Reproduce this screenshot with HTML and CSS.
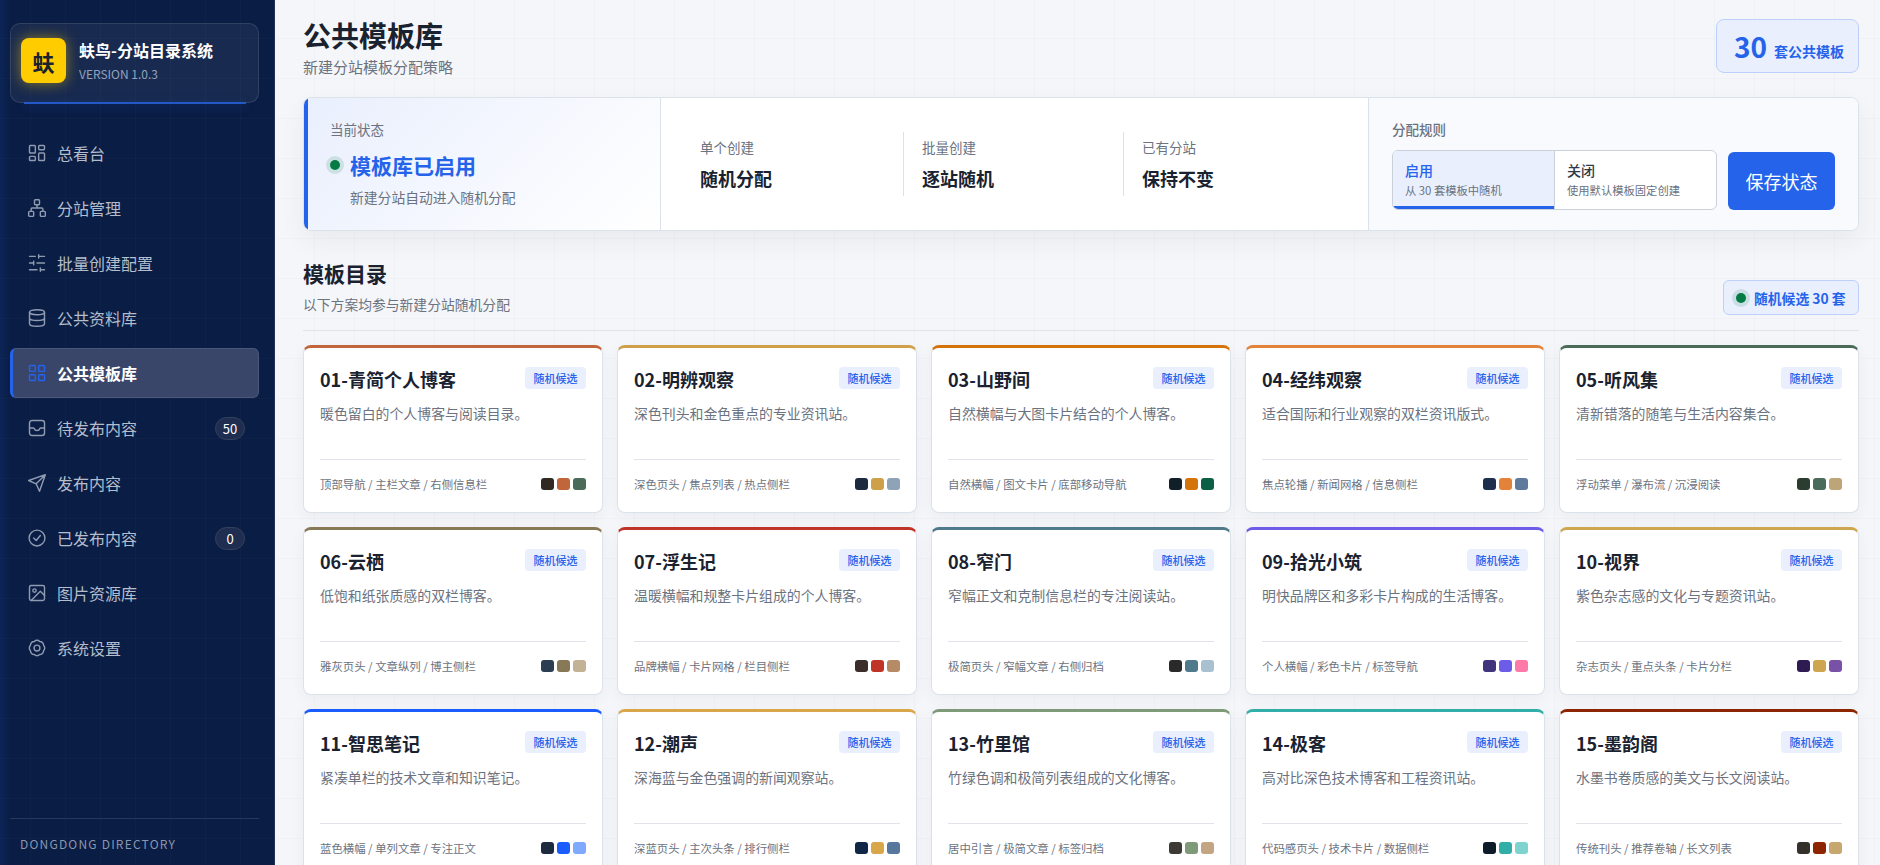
FILE: index.html
```html
<!DOCTYPE html>
<html lang="zh-CN">
<head>
    <meta charset="UTF-8">
    <title>公共模板库</title>
    <link rel="stylesheet" href="styles.css">
</head>
<body>
<div class="app">
    <aside class="sidebar">
        <div class="brand">
            <div class="brand-logo">蚨</div>
            <div>
                <div class="brand-name">蚨鸟-分站目录系统</div>
                <div class="brand-version">VERSION 1.0.3</div>
            </div>
        </div>

        <nav class="nav">
            <a class="nav-item">
                <svg class="nav-icon" viewBox="0 0 24 24"><rect x="3" y="3" width="7" height="9" rx="1"/><rect x="14" y="3" width="7" height="5" rx="1"/><rect x="14" y="12" width="7" height="9" rx="1"/><rect x="3" y="16" width="7" height="5" rx="1"/></svg>
                <span>总看台</span>
            </a>
            <a class="nav-item">
                <svg class="nav-icon" viewBox="0 0 24 24"><rect x="9" y="2" width="6" height="6" rx="1"/><rect x="2" y="16" width="6" height="6" rx="1"/><rect x="16" y="16" width="6" height="6" rx="1"/><path d="M5 16v-3a1 1 0 0 1 1-1h12a1 1 0 0 1 1 1v3M12 12V8"/></svg>
                <span>分站管理</span>
            </a>
            <a class="nav-item">
                <svg class="nav-icon" viewBox="0 0 24 24"><path d="M21 4h-7M10 4H3M21 12h-9M8 12H3M21 20h-5M12 20H3M14 2v4M8 10v4M16 18v4"/></svg>
                <span>批量创建配置</span>
            </a>
            <a class="nav-item">
                <svg class="nav-icon" viewBox="0 0 24 24"><ellipse cx="12" cy="5" rx="9" ry="3"/><path d="M3 5v14a9 3 0 0 0 18 0V5M3 12a9 3 0 0 0 18 0"/></svg>
                <span>公共资料库</span>
            </a>
            <a class="nav-item active">
                <svg class="nav-icon" viewBox="0 0 24 24"><rect x="3" y="3" width="7" height="7" rx="1"/><rect x="14" y="3" width="7" height="7" rx="1"/><rect x="14" y="14" width="7" height="7" rx="1"/><rect x="3" y="14" width="7" height="7" rx="1"/></svg>
                <span>公共模板库</span>
            </a>
            <a class="nav-item">
                <svg class="nav-icon" viewBox="0 0 24 24"><rect x="3" y="3" width="18" height="18" rx="3"/><path d="M3 12h4.5c.6 0 1 .4 1.2.9.4 1.3 1.7 2.1 3.3 2.1s2.9-.8 3.3-2.1c.2-.5.6-.9 1.2-.9H21"/></svg>
                <span>待发布内容</span>
                <em class="nav-count">50</em>
            </a>
            <a class="nav-item">
                <svg class="nav-icon" viewBox="0 0 24 24"><path d="M22 2 11 13M22 2l-7 20-4-9-9-4z"/></svg>
                <span>发布内容</span>
            </a>
            <a class="nav-item">
                <svg class="nav-icon" viewBox="0 0 24 24"><circle cx="12" cy="12" r="9.5"/><path d="m8 12 3 3 5-6"/></svg>
                <span>已发布内容</span>
                <em class="nav-count">0</em>
            </a>
            <a class="nav-item">
                <svg class="nav-icon" viewBox="0 0 24 24"><rect x="3" y="3" width="18" height="18" rx="2"/><circle cx="9" cy="9" r="2"/><path d="m21 15-5-5L5 21"/></svg>
                <span>图片资源库</span>
            </a>
            <a class="nav-item">
                <svg class="nav-icon" viewBox="0 0 24 24"><circle cx="12" cy="12" r="3.5"/><path d="M8.75 4.15A4.5 4.5 0 0 1 15.25 4.15A4.5 4.5 0 0 1 19.85 8.75A4.5 4.5 0 0 1 19.85 15.25A4.5 4.5 0 0 1 15.25 19.85A4.5 4.5 0 0 1 8.75 19.85A4.5 4.5 0 0 1 4.15 15.25A4.5 4.5 0 0 1 4.15 8.75A4.5 4.5 0 0 1 8.75 4.15z"/></svg>
                <span>系统设置</span>
            </a>
        </nav>

        <div class="sidebar-foot">DONGDONG DIRECTORY</div>
    </aside>

    <main class="main">
        <header class="page-head">
            <div>
                <h1>公共模板库</h1>
                <p>新建分站模板分配策略</p>
            </div>
            <div class="total-box"><strong>30</strong><span>套公共模板</span></div>
        </header>

        <section class="status-panel">
            <div class="status-now">
                <div class="status-label">当前状态</div>
                <div class="status-title"><i class="dot"></i>模板库已启用</div>
                <div class="status-note">新建分站自动进入随机分配</div>
            </div>
            <div class="status-modes">
                <div class="mode">
                    <div class="mode-label">单个创建</div>
                    <div class="mode-value">随机分配</div>
                </div>
                <div class="mode">
                    <div class="mode-label">批量创建</div>
                    <div class="mode-value">逐站随机</div>
                </div>
                <div class="mode">
                    <div class="mode-label">已有分站</div>
                    <div class="mode-value">保持不变</div>
                </div>
            </div>
            <div class="status-rule">
                <div class="rule-label">分配规则</div>
                <div class="rule-row">
                    <div class="segment">
                        <div class="segment-item on">
                            <b>启用</b>
                            <small>从 30 套模板中随机</small>
                        </div>
                        <div class="segment-item">
                            <b>关闭</b>
                            <small>使用默认模板固定创建</small>
                        </div>
                    </div>
                    <button class="save-btn">保存状态</button>
                </div>
            </div>
        </section>

        <div class="section-head">
            <div>
                <h2>模板目录</h2>
                <p>以下方案均参与新建分站随机分配</p>
            </div>
            <div class="candidate-pill"><i class="dot"></i>随机候选 30 套</div>
        </div>

        <div class="template-grid">
            <article class="card" style="--accent:#c0663a">
                <div class="card-top"><h3>01-青简个人博客</h3><span class="tag">随机候选</span></div>
                <p class="card-desc">暖色留白的个人博客与阅读目录。</p>
                <div class="card-foot"><span>顶部导航 / 主栏文章 / 右侧信息栏</span><div class="swatches"><i style="background:#2f2823"></i><i style="background:#c0663a"></i><i style="background:#4a6b5a"></i></div></div>
            </article>
            <article class="card" style="--accent:#cfa04a">
                <div class="card-top"><h3>02-明辨观察</h3><span class="tag">随机候选</span></div>
                <p class="card-desc">深色刊头和金色重点的专业资讯站。</p>
                <div class="card-foot"><span>深色页头 / 焦点列表 / 热点侧栏</span><div class="swatches"><i style="background:#1b2a3f"></i><i style="background:#cfa04a"></i><i style="background:#8fa3b8"></i></div></div>
            </article>
            <article class="card" style="--accent:#d4730a">
                <div class="card-top"><h3>03-山野间</h3><span class="tag">随机候选</span></div>
                <p class="card-desc">自然横幅与大图卡片结合的个人博客。</p>
                <div class="card-foot"><span>自然横幅 / 图文卡片 / 底部移动导航</span><div class="swatches"><i style="background:#101f28"></i><i style="background:#d4730a"></i><i style="background:#0a5f45"></i></div></div>
            </article>
            <article class="card" style="--accent:#e5823a">
                <div class="card-top"><h3>04-经纬观察</h3><span class="tag">随机候选</span></div>
                <p class="card-desc">适合国际和行业观察的双栏资讯版式。</p>
                <div class="card-foot"><span>焦点轮播 / 新闻网格 / 信息侧栏</span><div class="swatches"><i style="background:#1e2f4d"></i><i style="background:#e5823a"></i><i style="background:#5f7a9c"></i></div></div>
            </article>
            <article class="card" style="--accent:#4a6b5a">
                <div class="card-top"><h3>05-听风集</h3><span class="tag">随机候选</span></div>
                <p class="card-desc">清新错落的随笔与生活内容集合。</p>
                <div class="card-foot"><span>浮动菜单 / 瀑布流 / 沉浸阅读</span><div class="swatches"><i style="background:#2b3d30"></i><i style="background:#4a6b5a"></i><i style="background:#bda578"></i></div></div>
            </article>
            <article class="card" style="--accent:#877856">
                <div class="card-top"><h3>06-云栖</h3><span class="tag">随机候选</span></div>
                <p class="card-desc">低饱和纸张质感的双栏博客。</p>
                <div class="card-foot"><span>雅灰页头 / 文章纵列 / 博主侧栏</span><div class="swatches"><i style="background:#2b3d50"></i><i style="background:#877856"></i><i style="background:#c3b295"></i></div></div>
            </article>
            <article class="card" style="--accent:#c03428">
                <div class="card-top"><h3>07-浮生记</h3><span class="tag">随机候选</span></div>
                <p class="card-desc">温暖横幅和规整卡片组成的个人博客。</p>
                <div class="card-foot"><span>品牌横幅 / 卡片网格 / 栏目侧栏</span><div class="swatches"><i style="background:#3a2d2a"></i><i style="background:#c03428"></i><i style="background:#b78a66"></i></div></div>
            </article>
            <article class="card" style="--accent:#4f7a8c">
                <div class="card-top"><h3>08-窄门</h3><span class="tag">随机候选</span></div>
                <p class="card-desc">窄幅正文和克制信息栏的专注阅读站。</p>
                <div class="card-foot"><span>极简页头 / 窄幅文章 / 右侧归档</span><div class="swatches"><i style="background:#2a2a2a"></i><i style="background:#4f7a8c"></i><i style="background:#a8c0cf"></i></div></div>
            </article>
            <article class="card" style="--accent:#6c5ce7">
                <div class="card-top"><h3>09-拾光小筑</h3><span class="tag">随机候选</span></div>
                <p class="card-desc">明快品牌区和多彩卡片构成的生活博客。</p>
                <div class="card-foot"><span>个人横幅 / 彩色卡片 / 标签导航</span><div class="swatches"><i style="background:#40347c"></i><i style="background:#6c5ce7"></i><i style="background:#fd79a8"></i></div></div>
            </article>
            <article class="card" style="--accent:#cfa650">
                <div class="card-top"><h3>10-视界</h3><span class="tag">随机候选</span></div>
                <p class="card-desc">紫色杂志感的文化与专题资讯站。</p>
                <div class="card-foot"><span>杂志页头 / 重点头条 / 卡片分栏</span><div class="swatches"><i style="background:#2d1b52"></i><i style="background:#cfa650"></i><i style="background:#7952a8"></i></div></div>
            </article>
            <article class="card" style="--accent:#1a5cff">
                <div class="card-top"><h3>11-智思笔记</h3><span class="tag">随机候选</span></div>
                <p class="card-desc">紧凑单栏的技术文章和知识笔记。</p>
                <div class="card-foot"><span>蓝色横幅 / 单列文章 / 专注正文</span><div class="swatches"><i style="background:#1b2a3f"></i><i style="background:#1a5cff"></i><i style="background:#7fa8ff"></i></div></div>
            </article>
            <article class="card" style="--accent:#d9a74a">
                <div class="card-top"><h3>12-潮声</h3><span class="tag">随机候选</span></div>
                <p class="card-desc">深海蓝与金色强调的新闻观察站。</p>
                <div class="card-foot"><span>深蓝页头 / 主次头条 / 排行侧栏</span><div class="swatches"><i style="background:#0f2744"></i><i style="background:#d9a74a"></i><i style="background:#56789c"></i></div></div>
            </article>
            <article class="card" style="--accent:#7f9a78">
                <div class="card-top"><h3>13-竹里馆</h3><span class="tag">随机候选</span></div>
                <p class="card-desc">竹绿色调和极简列表组成的文化博客。</p>
                <div class="card-foot"><span>居中引言 / 极简文章 / 标签归档</span><div class="swatches"><i style="background:#3d3a35"></i><i style="background:#7f9a78"></i><i style="background:#c2a582"></i></div></div>
            </article>
            <article class="card" style="--accent:#32aea8">
                <div class="card-top"><h3>14-极客</h3><span class="tag">随机候选</span></div>
                <p class="card-desc">高对比深色技术博客和工程资讯站。</p>
                <div class="card-foot"><span>代码感页头 / 技术卡片 / 数据侧栏</span><div class="swatches"><i style="background:#0d1b2a"></i><i style="background:#32aea8"></i><i style="background:#7dd3cd"></i></div></div>
            </article>
            <article class="card" style="--accent:#8c2500">
                <div class="card-top"><h3>15-墨韵阁</h3><span class="tag">随机候选</span></div>
                <p class="card-desc">水墨书卷质感的美文与长文阅读站。</p>
                <div class="card-foot"><span>传统刊头 / 推荐卷轴 / 长文列表</span><div class="swatches"><i style="background:#36302a"></i><i style="background:#8c2500"></i><i style="background:#c8a76e"></i></div></div>
            </article>
        </div>
    </main>
</div>
</body>
</html>
```

FILE: styles.css
```css
* {
    box-sizing: border-box;
}

html, body {
    height: 100%;
    margin: 0;
    overflow: hidden;
}

body {
    font-family: "Noto Sans CJK SC", "Noto Sans", sans-serif;
    color: #1a2230;
    background: #f5f6f9;
}

.app {
    display: flex;
    height: 100vh;
}

/* sidebar */
.sidebar {
    width: 275px;
    flex: none;
    display: flex;
    flex-direction: column;
    padding: 23px 15px 0 10px;
    color: #b4bdcc;
    border-right: 1px solid #1f3358;
    background-color: #0a1d45;
    background-image:
        linear-gradient(90deg, rgba(20, 70, 160, 0.2), rgba(20, 70, 160, 0) 10px),
        linear-gradient(rgba(255, 255, 255, 0.018) 1px, transparent 1px),
        linear-gradient(90deg, rgba(255, 255, 255, 0.018) 1px, transparent 1px);
    background-size: 100% 100%, 35px 40px, 35px 40px;
    background-position: 0 0, 0 -2px, -5px 0;
}

.brand {
    position: relative;
    height: 80px;
    display: flex;
    align-items: center;
    gap: 13px;
    padding: 0 10px 5px;
    background: rgba(255, 255, 255, 0.06);
    border: 1px solid rgba(255, 255, 255, 0.11);
    border-radius: 10px;
}

.brand::after {
    content: "";
    position: absolute;
    left: 13px;
    right: 12px;
    bottom: -2px;
    height: 2px;
    background: #2358c9;
    box-shadow: 0 2px 10px rgba(37, 99, 235, 0.35);
}

.brand-logo {
    width: 45px;
    height: 45px;
    display: flex;
    align-items: center;
    justify-content: center;
    background: #ffcc00;
    border-radius: 8px;
    color: #1a2230;
    font-size: 22px;
    font-weight: 700;
    box-shadow: 0 0 14px rgba(255, 204, 0, 0.5);
}

.brand-name {
    color: #fff;
    font-size: 16px;
    font-weight: 700;
    line-height: 24px;
}

.brand-version {
    color: #93a3bf;
    font-size: 12px;
    line-height: 20px;
    margin-top: 2px;
}

.nav {
    margin-top: 25px;
    flex: 1;
    display: flex;
    flex-direction: column;
    gap: 5px;
}

.nav-item {
    height: 50px;
    display: flex;
    align-items: center;
    gap: 10px;
    padding-left: 14px;
    padding-right: 13px;
    font-size: 16px;
    border: 1px solid transparent;
    border-left: 3px solid transparent;
    border-radius: 6px;
}

.nav-icon {
    width: 20px;
    height: 20px;
    flex: none;
    fill: none;
    stroke: #8f9bb0;
    stroke-width: 1.7;
    stroke-linecap: round;
    stroke-linejoin: round;
}

.nav-item.active {
    color: #fff;
    font-weight: 700;
    background: #39466a;
    border-color: #4a5778;
    border-left-color: #2563eb;
}

.nav-item.active .nav-icon {
    stroke: #2563eb;
}

.nav-count {
    margin-left: auto;
    min-width: 30px;
    height: 23px;
    line-height: 21px;
    padding: 0 6px;
    text-align: center;
    color: #fff;
    font-style: normal;
    font-size: 13px;
    background: #1f2d50;
    border: 1px solid #33415f;
    border-radius: 12px;
}

.sidebar-foot {
    height: 47px;
    line-height: 49px;
    padding-left: 10px;
    color: #8a96ad;
    font-size: 12px;
    letter-spacing: 1.2px;
    border-top: 1px solid #28375a;
}

/* main */
.main {
    flex: 1;
    min-width: 0;
    padding: 0 21px 0 28px;
    background-color: #f5f6f9;
    background-image:
        linear-gradient(rgba(30, 50, 90, 0.025) 1px, transparent 1px),
        linear-gradient(90deg, rgba(30, 50, 90, 0.025) 1px, transparent 1px);
    background-size: 40px 40px;
    background-position: 0 -2px, -1px 0;
}

.page-head {
    height: 97px;
    display: flex;
    justify-content: space-between;
    align-items: flex-start;
}

.page-head h1 {
    margin: 14px 0 0;
    font-size: 28px;
    line-height: 42px;
    font-weight: 700;
}

.page-head p {
    margin: 0;
    font-size: 15px;
    line-height: 22px;
    color: #6b7280;
}

.total-box {
    margin-top: 19px;
    height: 54px;
    width: 143px;
    display: flex;
    align-items: center;
    gap: 7px;
    padding-left: 17px;
    color: #2563eb;
    background: #e9effd;
    border: 1px solid #bdd0fb;
    border-radius: 8px;
}

.total-box strong {
    font-size: 28px;
}

.total-box span {
    font-size: 14px;
    font-weight: 700;
    padding-top: 10px;
}

.status-panel {
    height: 134px;
    display: flex;
    background: #fff;
    border: 1px solid #dbe2ea;
    border-radius: 8px;
    box-shadow: 0 10px 24px rgba(30, 50, 90, 0.06);
    overflow: hidden;
}

.status-now {
    width: 357px;
    flex: none;
    padding: 21px 0 0 22px;
    border-left: 4px solid #2563eb;
    border-right: 1px solid #dbe2ea;
    background: linear-gradient(135deg, #e9effd, #fff);
}

.status-label {
    font-size: 13.5px;
    line-height: 20px;
    color: #6b7280;
}

.status-title {
    display: flex;
    align-items: center;
    gap: 10px;
    margin-top: 10px;
    font-size: 21px;
    line-height: 32px;
    font-weight: 700;
    color: #2563eb;
}

.dot {
    width: 10px;
    height: 10px;
    flex: none;
    border-radius: 50%;
    background: #047a45;
    box-shadow: 0 0 0 4px rgba(4, 122, 69, 0.14);
}

.status-note {
    margin: 6px 0 0 20px;
    font-size: 13.8px;
    line-height: 20px;
    color: #6b7280;
}

.status-modes {
    flex: 1;
    display: grid;
    grid-template-columns: 203px 220px 1fr;
    align-items: center;
    padding-left: 39px;
}

.mode {
    height: 64px;
    padding-top: 5px;
}

.mode + .mode {
    padding-left: 18px;
    border-left: 1px solid #dbe2ea;
}

.mode-label {
    font-size: 13.5px;
    line-height: 20px;
    color: #6b7280;
}

.mode-value {
    margin-top: 8px;
    font-size: 18px;
    line-height: 26px;
    font-weight: 700;
}

.status-rule {
    width: 490px;
    flex: none;
    padding: 21px 0 0 23px;
    border-left: 1px solid #dbe2ea;
    background: #f9fafd;
}

.rule-label {
    font-size: 13.5px;
    line-height: 20px;
    font-weight: 500;
    color: #6b7280;
}

.rule-row {
    display: flex;
    align-items: flex-start;
    gap: 11px;
    margin-top: 11px;
}

.segment {
    width: 325px;
    height: 60px;
    display: flex;
    background: #fff;
    border: 1px solid #c9d0da;
    border-radius: 6px;
    overflow: hidden;
}

.segment-item {
    flex: 1;
    padding: 8px 0 0 12px;
}

.segment-item + .segment-item {
    border-left: 1px solid #c9d0da;
}

.segment-item b {
    display: block;
    font-size: 14px;
    line-height: 22px;
    font-weight: 500;
    color: #333a47;
}

.segment-item small {
    display: block;
    font-size: 11.3px;
    line-height: 18px;
    color: #6b7280;
}

.segment-item.on {
    flex: none;
    width: 161px;
    background: #e9effd;
    border-bottom: 3px solid #2563eb;
}

.segment-item.on b {
    color: #2563eb;
}

.save-btn {
    width: 107px;
    height: 58px;
    margin-top: 2px;
    border: none;
    border-radius: 6px;
    background: #2563eb;
    color: #fff;
    font-family: inherit;
    font-size: 18px;
}

.section-head {
    height: 100px;
    display: flex;
    justify-content: space-between;
    align-items: flex-start;
    border-bottom: 1px solid #e0e4ea;
}

.section-head h2 {
    margin: 26px 0 0;
    font-size: 21px;
    line-height: 32px;
    font-weight: 700;
}

.section-head p {
    margin: 5px 0 0;
    font-size: 13.8px;
    line-height: 20px;
    color: #6b7280;
}

.candidate-pill {
    margin-top: 49px;
    height: 35px;
    width: 136px;
    display: flex;
    align-items: center;
    gap: 8px;
    padding-left: 12px;
    color: #2563eb;
    font-size: 13.8px;
    font-weight: 700;
    background: #e9effd;
    border: 1px solid #bdd0fb;
    border-radius: 6px;
}

.template-grid {
    display: grid;
    grid-template-columns: repeat(5, 1fr);
    gap: 14px;
    margin-top: 14px;
}

.card {
    height: 168px;
    display: flex;
    flex-direction: column;
    padding: 19px 16px 0;
    background: #fff;
    border: 1px solid #dbe2ea;
    border-top: 3px solid var(--accent);
    border-radius: 8px;
    box-shadow: 0 4px 14px rgba(30, 50, 90, 0.05);
}

.card-top {
    display: flex;
    justify-content: space-between;
    align-items: flex-start;
}

.card-top h3 {
    margin: 0;
    font-size: 18px;
    line-height: 24px;
    font-weight: 700;
}

.tag {
    width: 61px;
    height: 22px;
    line-height: 22px;
    text-align: center;
    color: #2563eb;
    font-size: 11px;
    font-weight: 500;
    background: #e9effd;
    border-radius: 4px;
}

.card-desc {
    margin: 12px 0 0;
    height: 54px;
    font-size: 13.9px;
    line-height: 20px;
    color: #6b7280;
}

.card-foot {
    display: flex;
    justify-content: space-between;
    align-items: center;
    height: 49px;
    margin-top: 2px;
    border-top: 1px solid #e0e4ea;
    font-size: 11.4px;
    color: #6b7280;
}

.swatches {
    display: flex;
    gap: 3px;
}

.swatches i {
    width: 13px;
    height: 12px;
    border-radius: 3px;
}
```
